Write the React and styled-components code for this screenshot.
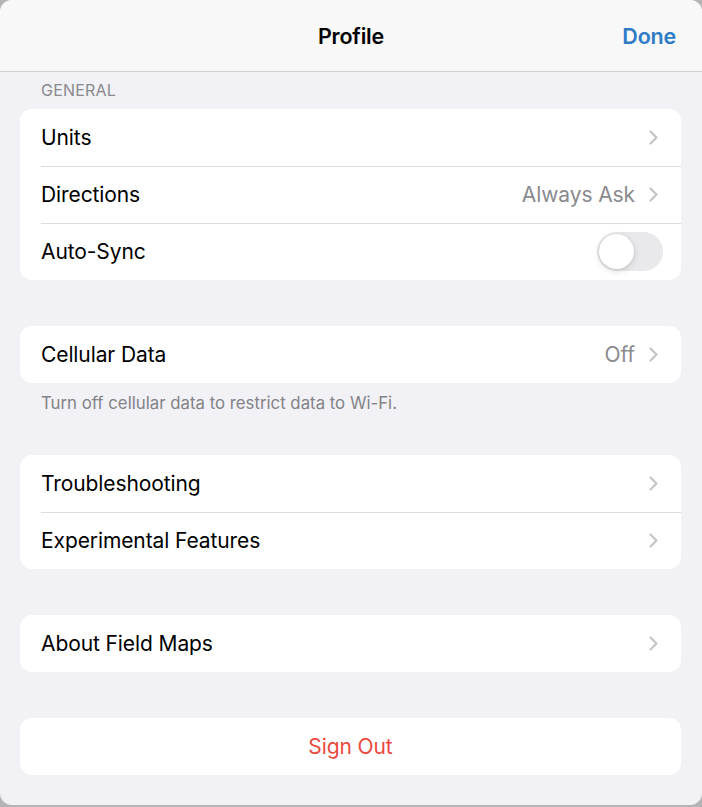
import React from "react";
import styled, { createGlobalStyle } from "styled-components";

const Global = createGlobalStyle`
  html, body { margin: 0; padding: 0; background: #b4b4b6; }
  body { font-family: Inter, "Noto Sans", Roboto, sans-serif; -webkit-font-smoothing: antialiased; }
  * { box-sizing: border-box; }
`;

const Sheet = styled.div`
  width: 702px;
  height: 805px;
  background: #f1f1f6;
  border-radius: 12px;
  overflow: hidden;
  display: flex;
  flex-direction: column;
`;

const NavBar = styled.header`
  height: 72px;
  flex: none;
  background: #f8f8f8;
  border-bottom: 1px solid #d2d2d4;
  display: grid;
  grid-template-columns: 1fr auto 1fr;
  align-items: center;
  padding: 0 26px 0 26px;
`;

const Title = styled.h1`
  grid-column: 2;
  margin: 0;
  font-size: 21.5px;
  font-weight: 600;
  color: #000;
  letter-spacing: -0.2px;
`;

const DoneButton = styled.button`
  grid-column: 3;
  justify-self: end;
  border: 0;
  background: none;
  padding: 0;
  font: inherit;
  font-size: 21.5px;
  font-weight: 600;
  color: #2f7bc6;
  letter-spacing: -0.2px;
`;

const Content = styled.main`
  display: flex;
  flex-direction: column;
  padding: 0 21px 0 20px;
`;

const Section = styled.section`
  display: flex;
  flex-direction: column;
  margin-top: ${(p) => p.$top}px;
`;

const SectionHeader = styled.div`
  font-size: 16px;
  color: #8a8a8e;
  text-transform: uppercase;
  padding: 8px 0 0 21px;
  height: 37px;
  letter-spacing: 0.2px;
`;

const SectionFooter = styled.div`
  font-size: 16.8px;
  color: #838388;
  padding: 10px 0 0 21px;
  height: 35px;
`;

const Card = styled.div`
  background: #fff;
  border-radius: 12px;
  overflow: hidden;
  display: flex;
  flex-direction: column;
`;

const Row = styled.div`
  height: 57px;
  display: flex;
  align-items: center;
  padding: 0 23px 0 21px;
  position: relative;
  & + &::before {
    content: "";
    position: absolute;
    top: 0;
    left: 21px;
    right: 0;
    height: 1px;
    background: #dcdcde;
  }
`;

const Label = styled.span`
  flex: 1;
  font-size: 21px;
  color: #000;
  letter-spacing: -0.1px;
`;

const Value = styled.span`
  font-size: 21px;
  color: #8a8a8e;
  margin-right: 14px;
  letter-spacing: -0.1px;
`;

const ActionRow = styled.button`
  height: 57px;
  border: 0;
  background: #fff;
  border-radius: 12px;
  font: inherit;
  font-size: 21px;
  color: #e9493e;
  letter-spacing: -0.1px;
`;

const Toggle = styled.div`
  width: 66px;
  height: 39px;
  border-radius: 20px;
  background: #e9e9eb;
  position: relative;
  margin-right: -5px;
  &::after {
    content: "";
    position: absolute;
    top: 2px;
    left: 2px;
    width: 35px;
    height: 35px;
    border-radius: 50%;
    background: #fff;
    box-shadow: 0 2px 6px rgba(0,0,0,0.15), 0 0 0 0.5px rgba(0,0,0,0.06);
  }
`;

const Chevron = () => (
  <svg width="9" height="15" viewBox="0 0 9 15" fill="none">
    <path d="M1.5 1.5 L7.5 7.5 L1.5 13.5" stroke="#c4c4c7" strokeWidth="2.2" strokeLinecap="round" strokeLinejoin="round" />
  </svg>
);

const NavRow = ({ label, value }) => (
  <Row>
    <Label>{label}</Label>
    {value && <Value>{value}</Value>}
    <Chevron />
  </Row>
);

export default function App() {
  return (
    <>
      <Global />
      <Sheet>
        <NavBar>
          <Title>Profile</Title>
          <DoneButton>Done</DoneButton>
        </NavBar>
        <Content>
          <Section $top={0}>
            <SectionHeader>General</SectionHeader>
            <Card>
              <NavRow label="Units" />
              <NavRow label="Directions" value="Always Ask" />
              <Row>
                <Label>Auto-Sync</Label>
                <Toggle />
              </Row>
            </Card>
          </Section>
          <Section $top={46}>
            <Card>
              <NavRow label="Cellular Data" value="Off" />
            </Card>
            <SectionFooter>Turn off cellular data to restrict data to Wi-Fi.</SectionFooter>
          </Section>
          <Section $top={37}>
            <Card>
              <NavRow label="Troubleshooting" />
              <NavRow label="Experimental Features" />
            </Card>
          </Section>
          <Section $top={46}>
            <Card>
              <NavRow label="About Field Maps" />
            </Card>
          </Section>
          <Section $top={46}>
            <ActionRow>Sign Out</ActionRow>
          </Section>
        </Content>
      </Sheet>
    </>
  );
}
